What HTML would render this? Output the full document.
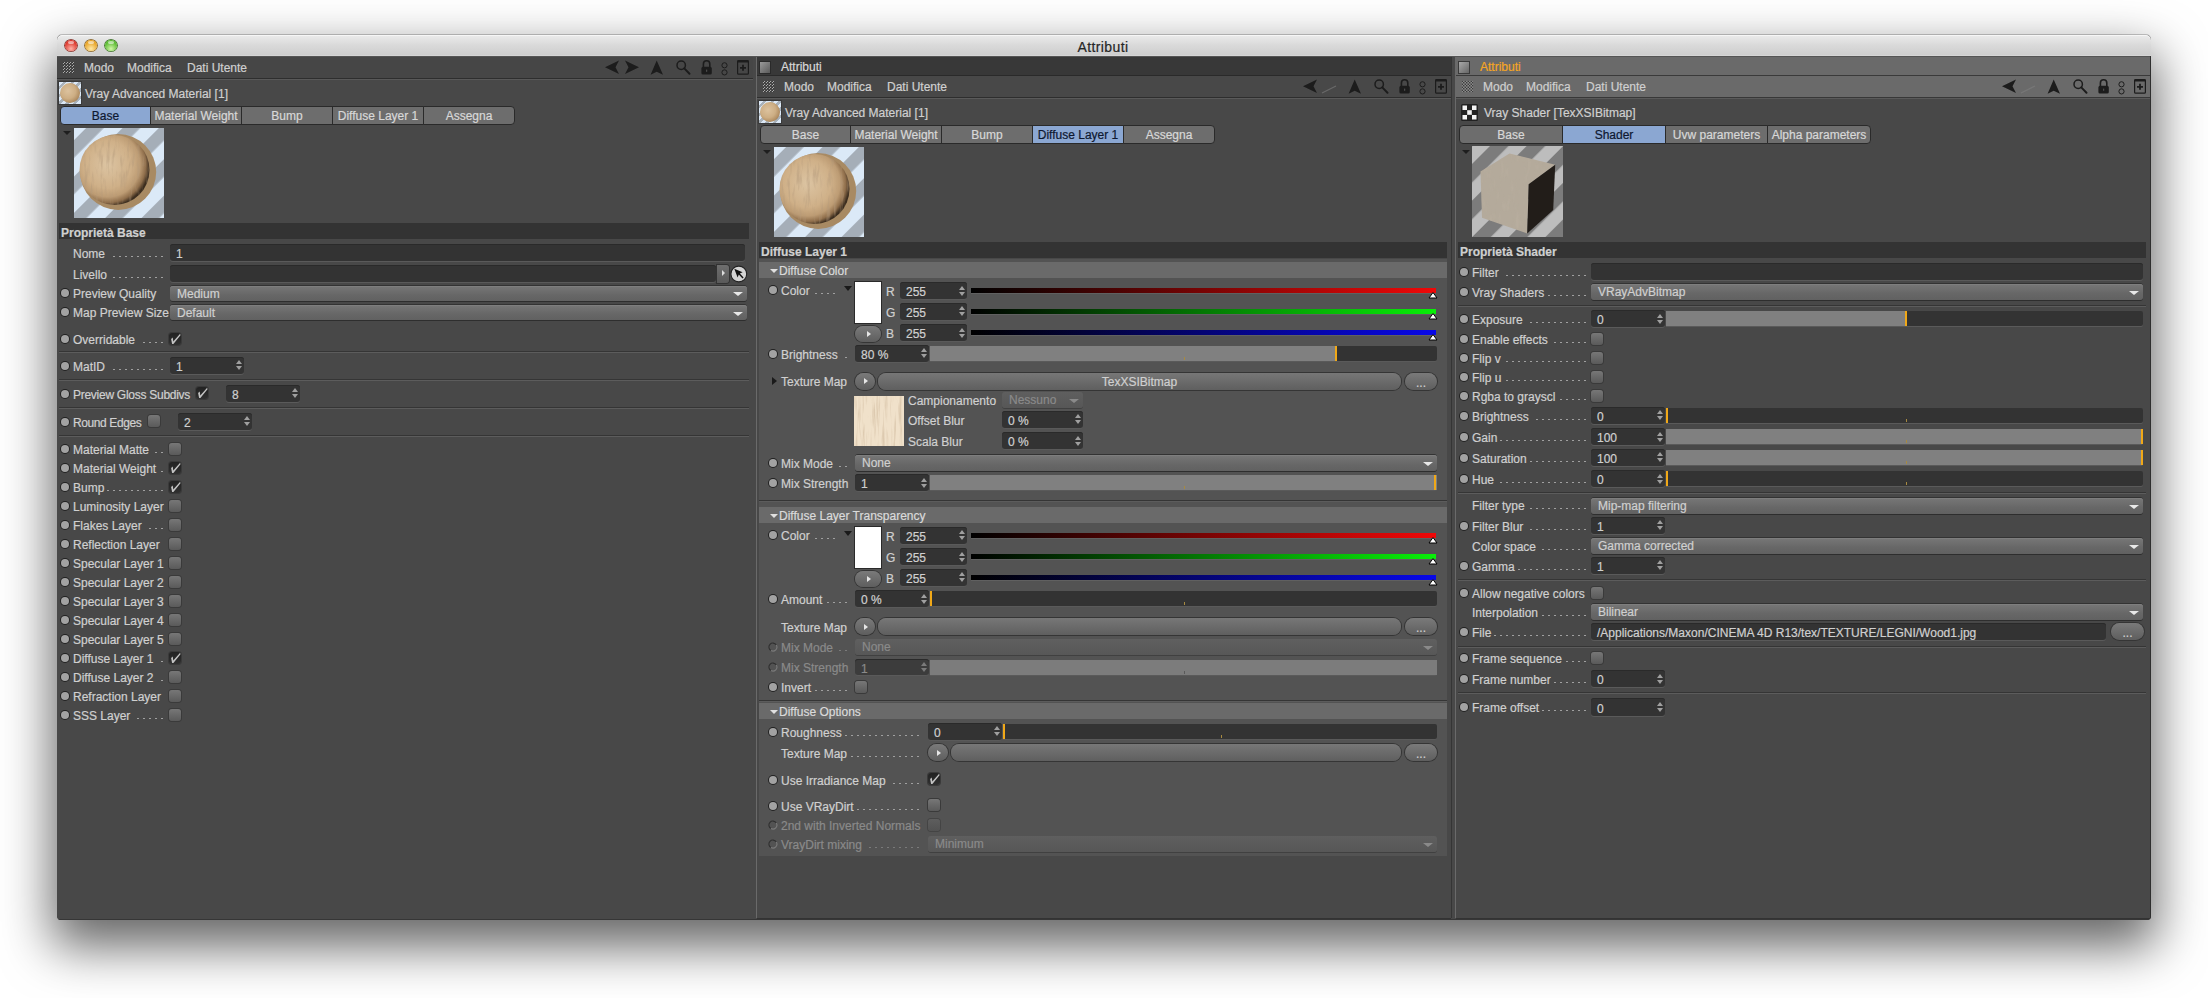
<!DOCTYPE html><html><head><meta charset="utf-8"><style>
html,body{margin:0;padding:0}
body{width:2208px;height:998px;background:#ffffff;position:relative;overflow:hidden;font-family:"Liberation Sans",sans-serif}
.t{position:absolute;white-space:pre;font:12px/14px "Liberation Sans",sans-serif;color:#d0d0d0;-webkit-text-stroke:0.2px currentColor}
.b{position:absolute;box-sizing:border-box}
.fld{position:absolute;box-sizing:border-box;background:#333333;border-radius:3px;box-shadow:inset 0 1px 0 #2a2a2a,0 1px 0 #5a5a5a}
.dd{position:absolute;box-sizing:border-box;background:linear-gradient(#777,#676767 60%,#616161);border-radius:3px;box-shadow:0 1px 0 #2e2e2e,0 -1px 0 #333,inset 0 1px 0 #7e7e7e}
.dd.dis{background:linear-gradient(#5f5f5f,#575757);box-shadow:0 1px 0 #404040}
.rad{position:absolute;width:8px;height:8px;border-radius:50%;background:#a2a2a2;box-shadow:0 0 0 1px #222;box-sizing:border-box}
.rad.dis{background:transparent;box-shadow:none;border:1px dashed #3a3a3a}
.up{position:absolute;width:0;height:0;border-style:solid;border-width:0 3px 4px 3px;border-color:transparent transparent #a0a0a0 transparent}
.dn{position:absolute;width:0;height:0;border-style:solid;border-width:4px 3px 0 3px;border-color:#a0a0a0 transparent transparent transparent}
.chk{position:absolute;width:12px;height:12px;border-radius:3px;background:linear-gradient(#777,#5a5a5a);box-shadow:0 0 0 1px #3a3a3a;box-sizing:border-box}
.chk.dis{background:linear-gradient(#5e5e5e,#525252);box-shadow:0 0 0 1px #444}
.chk.on{background:linear-gradient(#222,#303030);box-shadow:0 0 0 1px #3a3a3a}
.tab{position:absolute;box-sizing:border-box;border:1px solid #2a2a2a}
.rb{position:absolute;box-sizing:border-box;border-radius:9px;background:linear-gradient(#7a7a7a,#5e5e5e);box-shadow:0 0 0 1px #353535}
</style></head><body>

<div class="b" style="left:57px;top:35px;width:2094px;height:885px;border-radius:5px 5px 4px 4px;box-shadow:0 22px 50px 5px rgba(0,0,0,0.6),0 -1px 0 0 rgba(0,0,0,0.2);background:#484848"></div>
<div style="position:absolute;left:0;top:0;width:2208px;height:998px;clip-path:inset(35px 57px 78px 57px round 5px 5px 4px 4px)">
<div class="b" style="left:57px;top:35px;width:2094px;height:21px;border-radius:5px 5px 0 0;background:linear-gradient(#ebebeb,#d9d9d9 50%,#cdcdcd);box-shadow:inset 0 1px 0 #f6f6f6"></div>
<div class="b" style="left:57px;top:55px;width:2094px;height:1px;background:#d6d6d6"></div>
<div class="t" style="left:1003px;top:40px;color:#262626;font-size:14px;letter-spacing:0.4px;width:200px;text-align:center">Attributi</div>
<div class="b" style="left:65.0px;top:39.8px;width:11.6px;height:11.6px;border-radius:50%;background:radial-gradient(circle at 50% 80%,#ffb3a8 0,#dd3b30 65%);box-shadow:0 0 0 0.8px #7a1c15,0 0.5px 0.5px 0.8px rgba(255,255,255,0.6)"></div>
<div class="b" style="left:67.6px;top:41px;width:6.4px;height:3.2px;border-radius:50%;background:rgba(255,255,255,0.55)"></div>
<div class="b" style="left:85.0px;top:39.8px;width:11.6px;height:11.6px;border-radius:50%;background:radial-gradient(circle at 50% 80%,#ffe9a6 0,#e8a52a 65%);box-shadow:0 0 0 0.8px #7d5410,0 0.5px 0.5px 0.8px rgba(255,255,255,0.6)"></div>
<div class="b" style="left:87.6px;top:41px;width:6.4px;height:3.2px;border-radius:50%;background:rgba(255,255,255,0.55)"></div>
<div class="b" style="left:105.0px;top:39.8px;width:11.6px;height:11.6px;border-radius:50%;background:radial-gradient(circle at 50% 80%,#d2f7a8 0,#5ebc35 65%);box-shadow:0 0 0 0.8px #2a6312,0 0.5px 0.5px 0.8px rgba(255,255,255,0.6)"></div>
<div class="b" style="left:107.6px;top:41px;width:6.4px;height:3.2px;border-radius:50%;background:rgba(255,255,255,0.55)"></div>
<div class="b" style="left:57px;top:56px;width:699px;height:864px;background:#484848;border-bottom-left-radius:4px"></div>
<div class="b" style="left:57px;top:56px;width:696px;height:22px;background:#464646"></div>
<div class="b" style="left:57px;top:78px;width:696px;height:1px;background:#2e2e2e"></div>
<div class="b" style="left:57px;top:79px;width:696px;height:1px;background:#595959"></div>
<svg class="b" style="left:63px;top:62px" width="12" height="12" shape-rendering="crispEdges"><rect x="0" y="0" width="1" height="1" fill="#3a3a3a"/><rect x="1" y="1" width="1" height="1" fill="#3a3a3a"/><rect x="1" y="0" width="1" height="1" fill="#acacac"/><rect x="0" y="1" width="1" height="1" fill="#acacac"/><rect x="0" y="3" width="1" height="1" fill="#3a3a3a"/><rect x="1" y="4" width="1" height="1" fill="#3a3a3a"/><rect x="1" y="3" width="1" height="1" fill="#acacac"/><rect x="0" y="4" width="1" height="1" fill="#acacac"/><rect x="0" y="6" width="1" height="1" fill="#3a3a3a"/><rect x="1" y="7" width="1" height="1" fill="#3a3a3a"/><rect x="1" y="6" width="1" height="1" fill="#acacac"/><rect x="0" y="7" width="1" height="1" fill="#acacac"/><rect x="0" y="9" width="1" height="1" fill="#3a3a3a"/><rect x="1" y="10" width="1" height="1" fill="#3a3a3a"/><rect x="1" y="9" width="1" height="1" fill="#acacac"/><rect x="0" y="10" width="1" height="1" fill="#acacac"/><rect x="3" y="0" width="1" height="1" fill="#3a3a3a"/><rect x="4" y="1" width="1" height="1" fill="#3a3a3a"/><rect x="4" y="0" width="1" height="1" fill="#acacac"/><rect x="3" y="1" width="1" height="1" fill="#acacac"/><rect x="3" y="3" width="1" height="1" fill="#3a3a3a"/><rect x="4" y="4" width="1" height="1" fill="#3a3a3a"/><rect x="4" y="3" width="1" height="1" fill="#acacac"/><rect x="3" y="4" width="1" height="1" fill="#acacac"/><rect x="3" y="6" width="1" height="1" fill="#3a3a3a"/><rect x="4" y="7" width="1" height="1" fill="#3a3a3a"/><rect x="4" y="6" width="1" height="1" fill="#acacac"/><rect x="3" y="7" width="1" height="1" fill="#acacac"/><rect x="3" y="9" width="1" height="1" fill="#3a3a3a"/><rect x="4" y="10" width="1" height="1" fill="#3a3a3a"/><rect x="4" y="9" width="1" height="1" fill="#acacac"/><rect x="3" y="10" width="1" height="1" fill="#acacac"/><rect x="6" y="0" width="1" height="1" fill="#3a3a3a"/><rect x="7" y="1" width="1" height="1" fill="#3a3a3a"/><rect x="7" y="0" width="1" height="1" fill="#acacac"/><rect x="6" y="1" width="1" height="1" fill="#acacac"/><rect x="6" y="3" width="1" height="1" fill="#3a3a3a"/><rect x="7" y="4" width="1" height="1" fill="#3a3a3a"/><rect x="7" y="3" width="1" height="1" fill="#acacac"/><rect x="6" y="4" width="1" height="1" fill="#acacac"/><rect x="6" y="6" width="1" height="1" fill="#3a3a3a"/><rect x="7" y="7" width="1" height="1" fill="#3a3a3a"/><rect x="7" y="6" width="1" height="1" fill="#acacac"/><rect x="6" y="7" width="1" height="1" fill="#acacac"/><rect x="6" y="9" width="1" height="1" fill="#3a3a3a"/><rect x="7" y="10" width="1" height="1" fill="#3a3a3a"/><rect x="7" y="9" width="1" height="1" fill="#acacac"/><rect x="6" y="10" width="1" height="1" fill="#acacac"/><rect x="9" y="0" width="1" height="1" fill="#3a3a3a"/><rect x="10" y="1" width="1" height="1" fill="#3a3a3a"/><rect x="10" y="0" width="1" height="1" fill="#acacac"/><rect x="9" y="1" width="1" height="1" fill="#acacac"/><rect x="9" y="3" width="1" height="1" fill="#3a3a3a"/><rect x="10" y="4" width="1" height="1" fill="#3a3a3a"/><rect x="10" y="3" width="1" height="1" fill="#acacac"/><rect x="9" y="4" width="1" height="1" fill="#acacac"/><rect x="9" y="6" width="1" height="1" fill="#3a3a3a"/><rect x="10" y="7" width="1" height="1" fill="#3a3a3a"/><rect x="10" y="6" width="1" height="1" fill="#acacac"/><rect x="9" y="7" width="1" height="1" fill="#acacac"/><rect x="9" y="9" width="1" height="1" fill="#3a3a3a"/><rect x="10" y="10" width="1" height="1" fill="#3a3a3a"/><rect x="10" y="9" width="1" height="1" fill="#acacac"/><rect x="9" y="10" width="1" height="1" fill="#acacac"/></svg>
<div class="t" style="left:84px;top:61px;color:#d0d0d0;">Modo</div>
<div class="t" style="left:127px;top:61px;color:#d0d0d0;">Modifica</div>
<div class="t" style="left:187px;top:61px;color:#d0d0d0;">Dati Utente</div>
<svg class="b" style="left:605px;top:59px" width="150" height="18" viewBox="0 -2 150 18">
<path d="M0 6.3 L14 -0.6 L10.5 6.3 L14 13 Z" fill="#1c1c1c"/>
<path d="M34 6.3 L20 -0.6 L23.5 6.3 L20 13 Z" fill="#1c1c1c"/>
<path d="M51.7 -0.4 L58 13.8 L51.7 10.8 L45.6 13.8 Z" fill="#1c1c1c"/>
<circle cx="76.2" cy="4.2" r="4.2" fill="none" stroke="#1c1c1c" stroke-width="1.5"/>
<path d="M79.3 7.4 L84.5 12.7" stroke="#1c1c1c" stroke-width="2" stroke-linecap="round"/>
<path d="M98.4 6.5 V3 A3.2 3.2 0 0 1 104.8 3 V6.5" fill="none" stroke="#1c1c1c" stroke-width="1.6"/>
<rect x="96.4" y="5.8" width="10.4" height="7.8" rx="1.6" fill="#1c1c1c"/>
<rect x="101.1" y="8.6" width="1.1" height="2.2" fill="#6a6a6a" opacity="0.7"/>
<circle cx="119.5" cy="4.3" r="2.6" fill="none" stroke="#1c1c1c" stroke-width="1"/>
<circle cx="119.5" cy="11.4" r="2.6" fill="none" stroke="#1c1c1c" stroke-width="1"/>
<rect x="132.6" y="-0.4" width="10.8" height="13.6" rx="1" fill="none" stroke="#1c1c1c" stroke-width="1.2"/>
<rect x="132.3" y="-0.7" width="11.4" height="2.2" rx="0.8" fill="#1c1c1c"/>
<path d="M138 3.8 V9.8 M135 6.8 H141" stroke="#1c1c1c" stroke-width="1.8"/>
</svg>
<div class="b" style="left:59px;top:82px;width:22px;height:22px;background:repeating-linear-gradient(135deg,#dce9f7 0 3.1px,#a9b2bb 3.1px 5.5px);overflow:hidden;box-shadow:0 0 0 1px #3a3a3a"><div style="position:absolute;left:1.3px;top:1.3px;width:19.8px;height:19.8px;border-radius:50%;background:radial-gradient(circle at 40% 40%,#dcc29e 0%,#cdae84 45%,#b08d62 70%,#6a5036 88%,#2e2418 100%)"></div></div>
<div class="t" style="left:85px;top:87px;color:#d0d0d0;">Vray Advanced Material [1]</div>
<div class="tab" style="left:60px;top:106px;width:91px;height:19px;background:#8ba7d2;border-radius:4px 0 0 4px;"></div>
<div class="t" style="left:60px;top:109px;width:91px;text-align:center;color:#0e1830">Base</div>
<div class="tab" style="left:150px;top:106px;width:92px;height:19px;background:#6d6d6d;"></div>
<div class="t" style="left:150px;top:109px;width:92px;text-align:center;color:#d8d8d8">Material Weight</div>
<div class="tab" style="left:241px;top:106px;width:92px;height:19px;background:#6d6d6d;"></div>
<div class="t" style="left:241px;top:109px;width:92px;text-align:center;color:#d8d8d8">Bump</div>
<div class="tab" style="left:332px;top:106px;width:92px;height:19px;background:#6d6d6d;"></div>
<div class="t" style="left:332px;top:109px;width:92px;text-align:center;color:#d8d8d8">Diffuse Layer 1</div>
<div class="tab" style="left:423px;top:106px;width:92px;height:19px;background:#6d6d6d;border-radius:0 4px 4px 0;"></div>
<div class="t" style="left:423px;top:109px;width:92px;text-align:center;color:#d8d8d8">Assegna</div>
<div class="dn" style="left:63px;top:131px;border-width:4px 4px 0 4px;border-top-color:#1e1e1e"></div>
<svg class="b" style="left:74px;top:128px" width="90" height="90" viewBox="0 0 90 90"><defs><pattern id="st1" patternUnits="userSpaceOnUse" width="25.7" height="25.7" patternTransform="rotate(45) translate(8.6 0)"><rect width="25.7" height="25.7" fill="#dbe9f7"/><rect x="0" y="0" width="12.5" height="25.7" fill="#a5aeb8"/></pattern>
<radialGradient id="sg1" cx="0.4" cy="0.42" r="0.62"><stop offset="0" stop-color="#dcc4a2"/><stop offset="0.55" stop-color="#cfb088"/><stop offset="0.75" stop-color="#bd9c74"/><stop offset="0.88" stop-color="#8f6e4b"/><stop offset="0.97" stop-color="#3e2f20"/><stop offset="1" stop-color="#3a2c1e"/></radialGradient>
<pattern id="wg1" patternUnits="userSpaceOnUse" width="7" height="90"><rect width="7" height="90" fill="none"/><rect x="1" width="1" height="90" fill="#8a6840" opacity="0.10"/><rect x="4.5" width="0.8" height="90" fill="#8a6840" opacity="0.08"/></pattern>
<filter id="bl1"><feGaussianBlur stdDeviation="0.7"/></filter><filter id="tn1" x="0" y="0" width="100%" height="100%"><feTurbulence type="fractalNoise" baseFrequency="0.3 0.05" numOctaves="3" seed="1"/><feColorMatrix type="matrix" values="0 0 0 0 0.45  0 0 0 0 0.32  0 0 0 0 0.2  3.0 0 0 0 -1.5"/></filter></defs>
<rect width="90" height="90" fill="url(#st1)"/>
<circle cx="44.2" cy="44" r="38" fill="#a88a64" filter="url(#bl1)"/>
<circle cx="40.5" cy="42" r="35" fill="url(#sg1)"/>
<clipPath id="cp1"><circle cx="40.5" cy="42" r="35"/></clipPath><rect x="5" y="6" width="72" height="72" filter="url(#tn1)" clip-path="url(#cp1)" opacity="0.5"/>
</svg>
<div class="b" style="left:59px;top:223px;width:690px;height:16px;background:#333333"></div>
<div class="t" style="left:61px;top:226px;color:#d0d0d0;font-weight:bold;">Proprietà Base</div>
<div class="t" style="left:73px;top:247px;color:#d0d0d0;">Nome</div>
<div class="b" style="left:113px;top:256px;width:54px;height:1px;background:repeating-linear-gradient(to right,#a0a0a0 0 2px,transparent 2px 6px)"></div>
<div class="fld" style="left:170px;top:244px;width:575px;height:17px"></div>
<div class="t" style="left:176px;top:247px;color:#d0d0d0;">1</div>
<div class="t" style="left:73px;top:268px;color:#d0d0d0;">Livello</div>
<div class="b" style="left:113px;top:277px;width:54px;height:1px;background:repeating-linear-gradient(to right,#a0a0a0 0 2px,transparent 2px 6px)"></div>
<div class="fld" style="left:170px;top:265px;width:546px;height:17px"></div>
<div class="b" style="left:717px;top:265px;width:12px;height:18px;background:linear-gradient(#6e6e6e,#5a5a5a);border-radius:0 3px 3px 0;box-shadow:0 0 0 1px #333"></div>
<div class="b" style="left:722px;top:270px;width:0;height:0;border-style:solid;border-width:3px 0 3px 3px;border-color:transparent transparent transparent #ddd"></div>
<svg class="b" style="left:730px;top:265px" width="18" height="18" viewBox="0 0 18 18"><circle cx="8.8" cy="9" r="7.9" fill="#d4d4d4" stroke="#222" stroke-width="1.1"/><path d="M4.3 3.8 L12.6 7.2 L9.9 8.6 L13.6 12.4 L12.5 13.4 L8.8 9.6 L7.6 12.4 Z" fill="#111"/></svg>
<div class="rad" style="left:61px;top:289px"></div>
<div class="t" style="left:73px;top:287px;color:#d0d0d0;">Preview Quality</div>
<div class="dd" style="left:170px;top:286px;width:577px;height:15px"></div>
<div class="dn" style="left:733px;top:292px;border-width:4px 5px 0 5px;border-top-color:#e8e8e8"></div>
<div class="t" style="left:177px;top:287px;color:#d0d0d0;">Medium</div>
<div class="rad" style="left:61px;top:308px"></div>
<div class="t" style="left:73px;top:306px;color:#d0d0d0;">Map Preview Size</div>
<div class="dd" style="left:170px;top:305px;width:577px;height:15px"></div>
<div class="dn" style="left:733px;top:312px;border-width:4px 5px 0 5px;border-top-color:#e8e8e8"></div>
<div class="t" style="left:177px;top:306px;color:#d0d0d0;">Default</div>
<div class="rad" style="left:61px;top:335px"></div>
<div class="t" style="left:73px;top:333px;color:#d0d0d0;">Overridable</div>
<div class="b" style="left:143px;top:342px;width:24px;height:1px;background:repeating-linear-gradient(to right,#a0a0a0 0 2px,transparent 2px 6px)"></div>
<div class="chk on" style="left:169px;top:333px"></div>
<svg class="b" style="left:169px;top:333px" width="13" height="13" viewBox="0 0 13 13"><path d="M2.1 5.9 L3.7 4.6 L4.3 8.4 L10.9 0.9 L11.7 1.9 L4.4 10.9 L3.1 11.0 Z" fill="#c4c4c4"/></svg>
<div class="b" style="left:59px;top:351px;width:690px;height:1px;background:#353535"></div>
<div class="b" style="left:59px;top:352px;width:690px;height:1px;background:#5c5c5c"></div>
<div class="rad" style="left:61px;top:362px"></div>
<div class="t" style="left:73px;top:360px;color:#d0d0d0;">MatID</div>
<div class="b" style="left:113px;top:369px;width:54px;height:1px;background:repeating-linear-gradient(to right,#a0a0a0 0 2px,transparent 2px 6px)"></div>
<div class="fld" style="left:170px;top:357px;width:74px;height:17px"></div>
<div class="up" style="left:236px;top:360px;border-bottom-color:#a0a0a0"></div>
<div class="dn" style="left:236px;top:366px;border-top-color:#a0a0a0"></div>
<div class="t" style="left:176px;top:360px;color:#d0d0d0;">1</div>
<div class="b" style="left:59px;top:379px;width:690px;height:1px;background:#353535"></div>
<div class="b" style="left:59px;top:380px;width:690px;height:1px;background:#5c5c5c"></div>
<div class="rad" style="left:61px;top:390px"></div>
<div class="t" style="left:73px;top:388px;color:#d0d0d0;letter-spacing:-0.27px">Preview Gloss Subdivs</div>
<div class="chk on" style="left:196px;top:387px"></div>
<svg class="b" style="left:196px;top:387px" width="13" height="13" viewBox="0 0 13 13"><path d="M2.1 5.9 L3.7 4.6 L4.3 8.4 L10.9 0.9 L11.7 1.9 L4.4 10.9 L3.1 11.0 Z" fill="#c4c4c4"/></svg>
<div class="fld" style="left:226px;top:385px;width:74px;height:17px"></div>
<div class="up" style="left:292px;top:388px;border-bottom-color:#a0a0a0"></div>
<div class="dn" style="left:292px;top:394px;border-top-color:#a0a0a0"></div>
<div class="t" style="left:232px;top:388px;color:#d0d0d0;">8</div>
<div class="b" style="left:59px;top:407px;width:690px;height:1px;background:#353535"></div>
<div class="b" style="left:59px;top:408px;width:690px;height:1px;background:#5c5c5c"></div>
<div class="rad" style="left:61px;top:418px"></div>
<div class="t" style="left:73px;top:416px;color:#d0d0d0;letter-spacing:-0.4px">Round Edges</div>
<div class="chk" style="left:148px;top:415px"></div>
<div class="fld" style="left:178px;top:413px;width:74px;height:17px"></div>
<div class="up" style="left:244px;top:416px;border-bottom-color:#a0a0a0"></div>
<div class="dn" style="left:244px;top:422px;border-top-color:#a0a0a0"></div>
<div class="t" style="left:184px;top:416px;color:#d0d0d0;">2</div>
<div class="b" style="left:59px;top:435px;width:690px;height:1px;background:#353535"></div>
<div class="b" style="left:59px;top:436px;width:690px;height:1px;background:#5c5c5c"></div>
<div class="rad" style="left:61px;top:445px"></div>
<div class="t" style="left:73px;top:443px;color:#d0d0d0;">Material Matte</div>
<div class="b" style="left:155px;top:452px;width:12px;height:1px;background:repeating-linear-gradient(to right,#a0a0a0 0 2px,transparent 2px 6px)"></div>
<div class="chk" style="left:169px;top:443px"></div>
<div class="rad" style="left:61px;top:464px"></div>
<div class="t" style="left:73px;top:462px;color:#d0d0d0;">Material Weight</div>
<div class="b" style="left:161px;top:471px;width:6px;height:1px;background:repeating-linear-gradient(to right,#a0a0a0 0 2px,transparent 2px 6px)"></div>
<div class="chk on" style="left:169px;top:462px"></div>
<svg class="b" style="left:169px;top:462px" width="13" height="13" viewBox="0 0 13 13"><path d="M2.1 5.9 L3.7 4.6 L4.3 8.4 L10.9 0.9 L11.7 1.9 L4.4 10.9 L3.1 11.0 Z" fill="#c4c4c4"/></svg>
<div class="rad" style="left:61px;top:483px"></div>
<div class="t" style="left:73px;top:481px;color:#d0d0d0;">Bump</div>
<div class="b" style="left:107px;top:490px;width:60px;height:1px;background:repeating-linear-gradient(to right,#a0a0a0 0 2px,transparent 2px 6px)"></div>
<div class="chk on" style="left:169px;top:481px"></div>
<svg class="b" style="left:169px;top:481px" width="13" height="13" viewBox="0 0 13 13"><path d="M2.1 5.9 L3.7 4.6 L4.3 8.4 L10.9 0.9 L11.7 1.9 L4.4 10.9 L3.1 11.0 Z" fill="#c4c4c4"/></svg>
<div class="rad" style="left:61px;top:502px"></div>
<div class="t" style="left:73px;top:500px;color:#d0d0d0;">Luminosity Layer</div>
<div class="chk" style="left:169px;top:500px"></div>
<div class="rad" style="left:61px;top:521px"></div>
<div class="t" style="left:73px;top:519px;color:#d0d0d0;">Flakes Layer</div>
<div class="b" style="left:149px;top:528px;width:18px;height:1px;background:repeating-linear-gradient(to right,#a0a0a0 0 2px,transparent 2px 6px)"></div>
<div class="chk" style="left:169px;top:519px"></div>
<div class="rad" style="left:61px;top:540px"></div>
<div class="t" style="left:73px;top:538px;color:#d0d0d0;">Reflection Layer</div>
<div class="chk" style="left:169px;top:538px"></div>
<div class="rad" style="left:61px;top:559px"></div>
<div class="t" style="left:73px;top:557px;color:#d0d0d0;">Specular Layer 1</div>
<div class="chk" style="left:169px;top:557px"></div>
<div class="rad" style="left:61px;top:578px"></div>
<div class="t" style="left:73px;top:576px;color:#d0d0d0;">Specular Layer 2</div>
<div class="chk" style="left:169px;top:576px"></div>
<div class="rad" style="left:61px;top:597px"></div>
<div class="t" style="left:73px;top:595px;color:#d0d0d0;">Specular Layer 3</div>
<div class="chk" style="left:169px;top:595px"></div>
<div class="rad" style="left:61px;top:616px"></div>
<div class="t" style="left:73px;top:614px;color:#d0d0d0;">Specular Layer 4</div>
<div class="chk" style="left:169px;top:614px"></div>
<div class="rad" style="left:61px;top:635px"></div>
<div class="t" style="left:73px;top:633px;color:#d0d0d0;">Specular Layer 5</div>
<div class="chk" style="left:169px;top:633px"></div>
<div class="rad" style="left:61px;top:654px"></div>
<div class="t" style="left:73px;top:652px;color:#d0d0d0;">Diffuse Layer 1</div>
<div class="b" style="left:161px;top:661px;width:6px;height:1px;background:repeating-linear-gradient(to right,#a0a0a0 0 2px,transparent 2px 6px)"></div>
<div class="chk on" style="left:169px;top:652px"></div>
<svg class="b" style="left:169px;top:652px" width="13" height="13" viewBox="0 0 13 13"><path d="M2.1 5.9 L3.7 4.6 L4.3 8.4 L10.9 0.9 L11.7 1.9 L4.4 10.9 L3.1 11.0 Z" fill="#c4c4c4"/></svg>
<div class="rad" style="left:61px;top:673px"></div>
<div class="t" style="left:73px;top:671px;color:#d0d0d0;">Diffuse Layer 2</div>
<div class="b" style="left:161px;top:680px;width:6px;height:1px;background:repeating-linear-gradient(to right,#a0a0a0 0 2px,transparent 2px 6px)"></div>
<div class="chk" style="left:169px;top:671px"></div>
<div class="rad" style="left:61px;top:692px"></div>
<div class="t" style="left:73px;top:690px;color:#d0d0d0;">Refraction Layer</div>
<div class="chk" style="left:169px;top:690px"></div>
<div class="rad" style="left:61px;top:711px"></div>
<div class="t" style="left:73px;top:709px;color:#d0d0d0;">SSS Layer</div>
<div class="b" style="left:137px;top:718px;width:30px;height:1px;background:repeating-linear-gradient(to right,#a0a0a0 0 2px,transparent 2px 6px)"></div>
<div class="chk" style="left:169px;top:709px"></div>
<div class="b" style="left:756px;top:56px;width:1px;height:862px;background:#6a6a6a"></div>
<div class="b" style="left:757px;top:56px;width:694px;height:864px;background:#484848"></div>
<div class="b" style="left:757px;top:57px;width:694px;height:18px;background:#383838"></div>
<div class="b" style="left:757px;top:75px;width:694px;height:1px;background:#2a2a2a"></div>
<div class="b" style="left:760px;top:62px;width:10px;height:11px;background:linear-gradient(135deg,#9a9a9a,#5a5a5a);box-shadow:0 0 0 1px #2a2a2a"></div>
<div class="t" style="left:781px;top:60px;color:#d8d8d8;">Attributi</div>
<div class="b" style="left:757px;top:76px;width:694px;height:21px;background:#484848"></div>
<div class="b" style="left:757px;top:97px;width:694px;height:1px;background:#2e2e2e"></div>
<div class="b" style="left:757px;top:98px;width:694px;height:1px;background:#5a5a5a"></div>
<svg class="b" style="left:763px;top:81px" width="12" height="12" shape-rendering="crispEdges"><rect x="0" y="0" width="1" height="1" fill="#3a3a3a"/><rect x="1" y="1" width="1" height="1" fill="#3a3a3a"/><rect x="1" y="0" width="1" height="1" fill="#acacac"/><rect x="0" y="1" width="1" height="1" fill="#acacac"/><rect x="0" y="3" width="1" height="1" fill="#3a3a3a"/><rect x="1" y="4" width="1" height="1" fill="#3a3a3a"/><rect x="1" y="3" width="1" height="1" fill="#acacac"/><rect x="0" y="4" width="1" height="1" fill="#acacac"/><rect x="0" y="6" width="1" height="1" fill="#3a3a3a"/><rect x="1" y="7" width="1" height="1" fill="#3a3a3a"/><rect x="1" y="6" width="1" height="1" fill="#acacac"/><rect x="0" y="7" width="1" height="1" fill="#acacac"/><rect x="0" y="9" width="1" height="1" fill="#3a3a3a"/><rect x="1" y="10" width="1" height="1" fill="#3a3a3a"/><rect x="1" y="9" width="1" height="1" fill="#acacac"/><rect x="0" y="10" width="1" height="1" fill="#acacac"/><rect x="3" y="0" width="1" height="1" fill="#3a3a3a"/><rect x="4" y="1" width="1" height="1" fill="#3a3a3a"/><rect x="4" y="0" width="1" height="1" fill="#acacac"/><rect x="3" y="1" width="1" height="1" fill="#acacac"/><rect x="3" y="3" width="1" height="1" fill="#3a3a3a"/><rect x="4" y="4" width="1" height="1" fill="#3a3a3a"/><rect x="4" y="3" width="1" height="1" fill="#acacac"/><rect x="3" y="4" width="1" height="1" fill="#acacac"/><rect x="3" y="6" width="1" height="1" fill="#3a3a3a"/><rect x="4" y="7" width="1" height="1" fill="#3a3a3a"/><rect x="4" y="6" width="1" height="1" fill="#acacac"/><rect x="3" y="7" width="1" height="1" fill="#acacac"/><rect x="3" y="9" width="1" height="1" fill="#3a3a3a"/><rect x="4" y="10" width="1" height="1" fill="#3a3a3a"/><rect x="4" y="9" width="1" height="1" fill="#acacac"/><rect x="3" y="10" width="1" height="1" fill="#acacac"/><rect x="6" y="0" width="1" height="1" fill="#3a3a3a"/><rect x="7" y="1" width="1" height="1" fill="#3a3a3a"/><rect x="7" y="0" width="1" height="1" fill="#acacac"/><rect x="6" y="1" width="1" height="1" fill="#acacac"/><rect x="6" y="3" width="1" height="1" fill="#3a3a3a"/><rect x="7" y="4" width="1" height="1" fill="#3a3a3a"/><rect x="7" y="3" width="1" height="1" fill="#acacac"/><rect x="6" y="4" width="1" height="1" fill="#acacac"/><rect x="6" y="6" width="1" height="1" fill="#3a3a3a"/><rect x="7" y="7" width="1" height="1" fill="#3a3a3a"/><rect x="7" y="6" width="1" height="1" fill="#acacac"/><rect x="6" y="7" width="1" height="1" fill="#acacac"/><rect x="6" y="9" width="1" height="1" fill="#3a3a3a"/><rect x="7" y="10" width="1" height="1" fill="#3a3a3a"/><rect x="7" y="9" width="1" height="1" fill="#acacac"/><rect x="6" y="10" width="1" height="1" fill="#acacac"/><rect x="9" y="0" width="1" height="1" fill="#3a3a3a"/><rect x="10" y="1" width="1" height="1" fill="#3a3a3a"/><rect x="10" y="0" width="1" height="1" fill="#acacac"/><rect x="9" y="1" width="1" height="1" fill="#acacac"/><rect x="9" y="3" width="1" height="1" fill="#3a3a3a"/><rect x="10" y="4" width="1" height="1" fill="#3a3a3a"/><rect x="10" y="3" width="1" height="1" fill="#acacac"/><rect x="9" y="4" width="1" height="1" fill="#acacac"/><rect x="9" y="6" width="1" height="1" fill="#3a3a3a"/><rect x="10" y="7" width="1" height="1" fill="#3a3a3a"/><rect x="10" y="6" width="1" height="1" fill="#acacac"/><rect x="9" y="7" width="1" height="1" fill="#acacac"/><rect x="9" y="9" width="1" height="1" fill="#3a3a3a"/><rect x="10" y="10" width="1" height="1" fill="#3a3a3a"/><rect x="10" y="9" width="1" height="1" fill="#acacac"/><rect x="9" y="10" width="1" height="1" fill="#acacac"/></svg>
<div class="t" style="left:784px;top:80px;color:#d0d0d0;">Modo</div>
<div class="t" style="left:827px;top:80px;color:#d0d0d0;">Modifica</div>
<div class="t" style="left:887px;top:80px;color:#d0d0d0;">Dati Utente</div>
<svg class="b" style="left:1303px;top:78px" width="150" height="18" viewBox="0 -2 150 18">
<path d="M0 6.3 L14 -0.6 L10.5 6.3 L14 13 Z" fill="#1c1c1c"/>
<path d="M19 13 L33 6" stroke="#7f7f7f" stroke-width="1.2" opacity="0.6"/>
<path d="M51.7 -0.4 L58 13.8 L51.7 10.8 L45.6 13.8 Z" fill="#1c1c1c"/>
<circle cx="76.2" cy="4.2" r="4.2" fill="none" stroke="#1c1c1c" stroke-width="1.5"/>
<path d="M79.3 7.4 L84.5 12.7" stroke="#1c1c1c" stroke-width="2" stroke-linecap="round"/>
<path d="M98.4 6.5 V3 A3.2 3.2 0 0 1 104.8 3 V6.5" fill="none" stroke="#1c1c1c" stroke-width="1.6"/>
<rect x="96.4" y="5.8" width="10.4" height="7.8" rx="1.6" fill="#1c1c1c"/>
<rect x="101.1" y="8.6" width="1.1" height="2.2" fill="#6a6a6a" opacity="0.7"/>
<circle cx="119.5" cy="4.3" r="2.6" fill="none" stroke="#1c1c1c" stroke-width="1"/>
<circle cx="119.5" cy="11.4" r="2.6" fill="none" stroke="#1c1c1c" stroke-width="1"/>
<rect x="132.6" y="-0.4" width="10.8" height="13.6" rx="1" fill="none" stroke="#1c1c1c" stroke-width="1.2"/>
<rect x="132.3" y="-0.7" width="11.4" height="2.2" rx="0.8" fill="#1c1c1c"/>
<path d="M138 3.8 V9.8 M135 6.8 H141" stroke="#1c1c1c" stroke-width="1.8"/>
</svg>
<div class="b" style="left:759px;top:101px;width:22px;height:22px;background:repeating-linear-gradient(135deg,#dce9f7 0 3.1px,#a9b2bb 3.1px 5.5px);overflow:hidden;box-shadow:0 0 0 1px #3a3a3a"><div style="position:absolute;left:1.3px;top:1.3px;width:19.8px;height:19.8px;border-radius:50%;background:radial-gradient(circle at 40% 40%,#dcc29e 0%,#cdae84 45%,#b08d62 70%,#6a5036 88%,#2e2418 100%)"></div></div>
<div class="t" style="left:785px;top:106px;color:#d0d0d0;">Vray Advanced Material [1]</div>
<div class="tab" style="left:760px;top:125px;width:91px;height:19px;background:#6d6d6d;border-radius:4px 0 0 4px;"></div>
<div class="t" style="left:760px;top:128px;width:91px;text-align:center;color:#d8d8d8">Base</div>
<div class="tab" style="left:850px;top:125px;width:92px;height:19px;background:#6d6d6d;"></div>
<div class="t" style="left:850px;top:128px;width:92px;text-align:center;color:#d8d8d8">Material Weight</div>
<div class="tab" style="left:941px;top:125px;width:92px;height:19px;background:#6d6d6d;"></div>
<div class="t" style="left:941px;top:128px;width:92px;text-align:center;color:#d8d8d8">Bump</div>
<div class="tab" style="left:1032px;top:125px;width:92px;height:19px;background:#8ba7d2;"></div>
<div class="t" style="left:1032px;top:128px;width:92px;text-align:center;color:#0e1830">Diffuse Layer 1</div>
<div class="tab" style="left:1123px;top:125px;width:92px;height:19px;background:#6d6d6d;border-radius:0 4px 4px 0;"></div>
<div class="t" style="left:1123px;top:128px;width:92px;text-align:center;color:#d8d8d8">Assegna</div>
<div class="dn" style="left:763px;top:150px;border-width:4px 4px 0 4px;border-top-color:#1e1e1e"></div>
<svg class="b" style="left:774px;top:147px" width="90" height="90" viewBox="0 0 90 90"><defs><pattern id="st2" patternUnits="userSpaceOnUse" width="25.7" height="25.7" patternTransform="rotate(45) translate(8.6 0)"><rect width="25.7" height="25.7" fill="#dbe9f7"/><rect x="0" y="0" width="12.5" height="25.7" fill="#a5aeb8"/></pattern>
<radialGradient id="sg2" cx="0.4" cy="0.42" r="0.62"><stop offset="0" stop-color="#dcc4a2"/><stop offset="0.55" stop-color="#cfb088"/><stop offset="0.75" stop-color="#bd9c74"/><stop offset="0.88" stop-color="#8f6e4b"/><stop offset="0.97" stop-color="#3e2f20"/><stop offset="1" stop-color="#3a2c1e"/></radialGradient>
<pattern id="wg2" patternUnits="userSpaceOnUse" width="7" height="90"><rect width="7" height="90" fill="none"/><rect x="1" width="1" height="90" fill="#8a6840" opacity="0.10"/><rect x="4.5" width="0.8" height="90" fill="#8a6840" opacity="0.08"/></pattern>
<filter id="bl2"><feGaussianBlur stdDeviation="0.7"/></filter><filter id="tn2" x="0" y="0" width="100%" height="100%"><feTurbulence type="fractalNoise" baseFrequency="0.3 0.05" numOctaves="3" seed="2"/><feColorMatrix type="matrix" values="0 0 0 0 0.45  0 0 0 0 0.32  0 0 0 0 0.2  3.0 0 0 0 -1.5"/></filter></defs>
<rect width="90" height="90" fill="url(#st2)"/>
<circle cx="44.2" cy="44" r="38" fill="#a88a64" filter="url(#bl2)"/>
<circle cx="40.5" cy="42" r="35" fill="url(#sg2)"/>
<clipPath id="cp2"><circle cx="40.5" cy="42" r="35"/></clipPath><rect x="5" y="6" width="72" height="72" filter="url(#tn2)" clip-path="url(#cp2)" opacity="0.5"/>
</svg>
<div class="b" style="left:759px;top:242px;width:688px;height:16px;background:#333333"></div>
<div class="t" style="left:761px;top:245px;color:#d0d0d0;font-weight:bold;">Diffuse Layer 1</div>
<div class="b" style="left:759px;top:259px;width:688px;height:597px;background:#535353"></div>
<div class="b" style="left:759px;top:262px;width:688px;height:16px;background:#6a6a6a"></div>
<div class="dn" style="left:770px;top:269px;border-width:4px 4px 0 4px;border-top-color:#e0e0e0"></div>
<div class="t" style="left:779px;top:264px;color:#dadada;">Diffuse Color</div>
<div class="rad" style="left:769px;top:286px"></div>
<div class="t" style="left:781px;top:284px;color:#d0d0d0;">Color</div>
<div class="b" style="left:815px;top:293px;width:24px;height:1px;background:repeating-linear-gradient(to right,#a0a0a0 0 2px,transparent 2px 6px)"></div>
<div class="dn" style="left:844px;top:286px;border-width:5px 4px 0 4px;border-top-color:#1a1a1a"></div>
<div class="b" style="left:855px;top:282px;width:26px;height:41px;background:#fff;box-shadow:0 0 0 1px #2a2a2a"></div>
<div class="rb" style="left:855px;top:326px;width:26px;height:16px"></div>
<div class="b" style="left:867px;top:331px;width:0;height:0;border-style:solid;border-width:3.5px 0 3.5px 4px;border-color:transparent transparent transparent #e6e6e6"></div>
<div class="t" style="left:886px;top:285px;color:#d0d0d0;">R</div>
<div class="fld" style="left:900px;top:282px;width:67px;height:17px"></div>
<div class="up" style="left:959px;top:286px;border-bottom-color:#a0a0a0"></div>
<div class="dn" style="left:959px;top:292px;border-top-color:#a0a0a0"></div>
<div class="t" style="left:906px;top:285px;color:#d0d0d0;">255</div>
<div class="b" style="left:971px;top:288px;width:465px;height:5px;background:linear-gradient(to right,#000,#f00808);box-shadow:0 1px 0 rgba(255,255,255,0.08)"></div>
<svg class="b" style="left:1428px;top:291px" width="10" height="8" viewBox="0 0 10 8"><path d="M1 7 L5 1.5 L9 7 Z" fill="#fff" stroke="#000" stroke-width="1"/></svg>
<div class="t" style="left:886px;top:306px;color:#d0d0d0;">G</div>
<div class="fld" style="left:900px;top:303px;width:67px;height:17px"></div>
<div class="up" style="left:959px;top:306px;border-bottom-color:#a0a0a0"></div>
<div class="dn" style="left:959px;top:312px;border-top-color:#a0a0a0"></div>
<div class="t" style="left:906px;top:306px;color:#d0d0d0;">255</div>
<div class="b" style="left:971px;top:309px;width:465px;height:5px;background:linear-gradient(to right,#000,#08f008);box-shadow:0 1px 0 rgba(255,255,255,0.08)"></div>
<svg class="b" style="left:1428px;top:312px" width="10" height="8" viewBox="0 0 10 8"><path d="M1 7 L5 1.5 L9 7 Z" fill="#fff" stroke="#000" stroke-width="1"/></svg>
<div class="t" style="left:886px;top:327px;color:#d0d0d0;">B</div>
<div class="fld" style="left:900px;top:324px;width:67px;height:17px"></div>
<div class="up" style="left:959px;top:328px;border-bottom-color:#a0a0a0"></div>
<div class="dn" style="left:959px;top:334px;border-top-color:#a0a0a0"></div>
<div class="t" style="left:906px;top:327px;color:#d0d0d0;">255</div>
<div class="b" style="left:971px;top:330px;width:465px;height:5px;background:linear-gradient(to right,#000,#0808e8);box-shadow:0 1px 0 rgba(255,255,255,0.08)"></div>
<svg class="b" style="left:1428px;top:333px" width="10" height="8" viewBox="0 0 10 8"><path d="M1 7 L5 1.5 L9 7 Z" fill="#fff" stroke="#000" stroke-width="1"/></svg>
<div class="rad" style="left:769px;top:350px"></div>
<div class="t" style="left:781px;top:348px;color:#d0d0d0;">Brightness</div>
<div class="b" style="left:845px;top:357px;width:6px;height:1px;background:repeating-linear-gradient(to right,#a0a0a0 0 2px,transparent 2px 6px)"></div>
<div class="fld" style="left:855px;top:345px;width:74px;height:17px"></div>
<div class="up" style="left:921px;top:348px;border-bottom-color:#a0a0a0"></div>
<div class="dn" style="left:921px;top:354px;border-top-color:#a0a0a0"></div>
<div class="t" style="left:861px;top:348px;color:#d0d0d0;">80 %</div>
<div class="b" style="left:930px;top:346px;width:507px;height:15px;background:#333;border-radius:0 2px 2px 0;box-shadow:0 1px 0 #5a5a5a"></div>
<div class="b" style="left:930px;top:346px;width:406px;height:15px;background:#808080"></div>
<div class="b" style="left:1184px;top:357px;width:1px;height:3px;background:#a88a40"></div>
<div class="b" style="left:1335px;top:346px;width:2px;height:15px;background:#f0a818"></div>
<div class="b" style="left:772px;top:377px;width:0;height:0;border-style:solid;border-width:4px 0 4px 5px;border-color:transparent transparent transparent #1a1a1a"></div>
<div class="t" style="left:781px;top:375px;color:#d0d0d0;">Texture Map</div>
<div class="rb" style="left:855px;top:373px;width:20px;height:17px"></div>
<div class="b" style="left:864px;top:378px;width:0;height:0;border-style:solid;border-width:3.5px 0 3.5px 4px;border-color:transparent transparent transparent #e6e6e6"></div>
<div class="b" style="left:878px;top:373px;width:523px;height:17px;border-radius:8px;background:linear-gradient(#777,#5f5f5f);box-shadow:0 0 0 1px #353535"></div>
<div class="t" style="left:878px;top:375px;color:#d0d0d0;width:523px;text-align:center">TexXSIBitmap</div>
<div class="rb" style="left:1405px;top:373px;width:32px;height:17px"></div>
<div class="t" style="left:1405px;top:376px;color:#d0d0d0;width:32px;text-align:center">...</div>
<svg class="b" style="left:854px;top:396px" width="50" height="50" viewBox="0 0 50 50"><defs><filter id="txn" x="0" y="0" width="100%" height="100%"><feTurbulence type="fractalNoise" baseFrequency="0.35 0.03" numOctaves="3" seed="7"/><feColorMatrix type="matrix" values="0 0 0 0 0.62  0 0 0 0 0.48  0 0 0 0 0.33  3.2 0 0 0 -1.55"/></filter></defs><rect width="50" height="50" fill="#f0e1ca"/><rect width="50" height="50" filter="url(#txn)" opacity="0.55"/></svg>
<div class="t" style="left:908px;top:394px;color:#d0d0d0;">Campionamento</div>
<div class="dd dis" style="left:1002px;top:392px;width:81px;height:16px"></div>
<div class="dn" style="left:1069px;top:399px;border-width:4px 5px 0 5px;border-top-color:#8a8a8a"></div>
<div class="t" style="left:1009px;top:393px;color:#8a8a8a;">Nessuno</div>
<div class="t" style="left:908px;top:414px;color:#d0d0d0;">Offset Blur</div>
<div class="fld" style="left:1002px;top:411px;width:81px;height:17px"></div>
<div class="up" style="left:1075px;top:414px;border-bottom-color:#a0a0a0"></div>
<div class="dn" style="left:1075px;top:420px;border-top-color:#a0a0a0"></div>
<div class="t" style="left:1008px;top:414px;color:#d0d0d0;">0 %</div>
<div class="t" style="left:908px;top:435px;color:#d0d0d0;">Scala Blur</div>
<div class="fld" style="left:1002px;top:432px;width:81px;height:17px"></div>
<div class="up" style="left:1075px;top:436px;border-bottom-color:#a0a0a0"></div>
<div class="dn" style="left:1075px;top:442px;border-top-color:#a0a0a0"></div>
<div class="t" style="left:1008px;top:435px;color:#d0d0d0;">0 %</div>
<div class="rad" style="left:769px;top:459px"></div>
<div class="t" style="left:781px;top:457px;color:#d0d0d0;">Mix Mode</div>
<div class="b" style="left:839px;top:466px;width:12px;height:1px;background:repeating-linear-gradient(to right,#a0a0a0 0 2px,transparent 2px 6px)"></div>
<div class="dd" style="left:855px;top:455px;width:582px;height:16px"></div>
<div class="dn" style="left:1423px;top:462px;border-width:4px 5px 0 5px;border-top-color:#e8e8e8"></div>
<div class="t" style="left:862px;top:456px;color:#d0d0d0;">None</div>
<div class="rad" style="left:769px;top:479px"></div>
<div class="t" style="left:781px;top:477px;color:#d0d0d0;">Mix Strength</div>
<div class="fld" style="left:855px;top:474px;width:74px;height:17px"></div>
<div class="up" style="left:921px;top:478px;border-bottom-color:#a0a0a0"></div>
<div class="dn" style="left:921px;top:484px;border-top-color:#a0a0a0"></div>
<div class="t" style="left:861px;top:477px;color:#d0d0d0;">1</div>
<div class="b" style="left:930px;top:475px;width:507px;height:15px;background:#333;border-radius:0 2px 2px 0;box-shadow:0 1px 0 #5a5a5a"></div>
<div class="b" style="left:930px;top:475px;width:507px;height:15px;background:#808080"></div>
<div class="b" style="left:1184px;top:486px;width:1px;height:3px;background:#a88a40"></div>
<div class="b" style="left:1434px;top:475px;width:2px;height:15px;background:#f0a818"></div>
<div class="b" style="left:759px;top:500px;width:688px;height:1px;background:#353535"></div>
<div class="b" style="left:759px;top:501px;width:688px;height:1px;background:#5c5c5c"></div>
<div class="b" style="left:759px;top:507px;width:688px;height:16px;background:#6a6a6a"></div>
<div class="dn" style="left:770px;top:514px;border-width:4px 4px 0 4px;border-top-color:#e0e0e0"></div>
<div class="t" style="left:779px;top:509px;color:#dadada;">Diffuse Layer Transparency</div>
<div class="rad" style="left:769px;top:531px"></div>
<div class="t" style="left:781px;top:529px;color:#d0d0d0;">Color</div>
<div class="b" style="left:815px;top:538px;width:24px;height:1px;background:repeating-linear-gradient(to right,#a0a0a0 0 2px,transparent 2px 6px)"></div>
<div class="dn" style="left:844px;top:531px;border-width:5px 4px 0 4px;border-top-color:#1a1a1a"></div>
<div class="b" style="left:855px;top:527px;width:26px;height:41px;background:#fff;box-shadow:0 0 0 1px #2a2a2a"></div>
<div class="rb" style="left:855px;top:571px;width:26px;height:16px"></div>
<div class="b" style="left:867px;top:576px;width:0;height:0;border-style:solid;border-width:3.5px 0 3.5px 4px;border-color:transparent transparent transparent #e6e6e6"></div>
<div class="t" style="left:886px;top:530px;color:#d0d0d0;">R</div>
<div class="fld" style="left:900px;top:527px;width:67px;height:17px"></div>
<div class="up" style="left:959px;top:530px;border-bottom-color:#a0a0a0"></div>
<div class="dn" style="left:959px;top:536px;border-top-color:#a0a0a0"></div>
<div class="t" style="left:906px;top:530px;color:#d0d0d0;">255</div>
<div class="b" style="left:971px;top:533px;width:465px;height:5px;background:linear-gradient(to right,#000,#f00808);box-shadow:0 1px 0 rgba(255,255,255,0.08)"></div>
<svg class="b" style="left:1428px;top:536px" width="10" height="8" viewBox="0 0 10 8"><path d="M1 7 L5 1.5 L9 7 Z" fill="#fff" stroke="#000" stroke-width="1"/></svg>
<div class="t" style="left:886px;top:551px;color:#d0d0d0;">G</div>
<div class="fld" style="left:900px;top:548px;width:67px;height:17px"></div>
<div class="up" style="left:959px;top:552px;border-bottom-color:#a0a0a0"></div>
<div class="dn" style="left:959px;top:558px;border-top-color:#a0a0a0"></div>
<div class="t" style="left:906px;top:551px;color:#d0d0d0;">255</div>
<div class="b" style="left:971px;top:554px;width:465px;height:5px;background:linear-gradient(to right,#000,#08f008);box-shadow:0 1px 0 rgba(255,255,255,0.08)"></div>
<svg class="b" style="left:1428px;top:557px" width="10" height="8" viewBox="0 0 10 8"><path d="M1 7 L5 1.5 L9 7 Z" fill="#fff" stroke="#000" stroke-width="1"/></svg>
<div class="t" style="left:886px;top:572px;color:#d0d0d0;">B</div>
<div class="fld" style="left:900px;top:569px;width:67px;height:17px"></div>
<div class="up" style="left:959px;top:572px;border-bottom-color:#a0a0a0"></div>
<div class="dn" style="left:959px;top:578px;border-top-color:#a0a0a0"></div>
<div class="t" style="left:906px;top:572px;color:#d0d0d0;">255</div>
<div class="b" style="left:971px;top:575px;width:465px;height:5px;background:linear-gradient(to right,#000,#0808e8);box-shadow:0 1px 0 rgba(255,255,255,0.08)"></div>
<svg class="b" style="left:1428px;top:578px" width="10" height="8" viewBox="0 0 10 8"><path d="M1 7 L5 1.5 L9 7 Z" fill="#fff" stroke="#000" stroke-width="1"/></svg>
<div class="rad" style="left:769px;top:595px"></div>
<div class="t" style="left:781px;top:593px;color:#d0d0d0;">Amount</div>
<div class="b" style="left:827px;top:602px;width:24px;height:1px;background:repeating-linear-gradient(to right,#a0a0a0 0 2px,transparent 2px 6px)"></div>
<div class="fld" style="left:855px;top:590px;width:74px;height:17px"></div>
<div class="up" style="left:921px;top:594px;border-bottom-color:#a0a0a0"></div>
<div class="dn" style="left:921px;top:600px;border-top-color:#a0a0a0"></div>
<div class="t" style="left:861px;top:593px;color:#d0d0d0;">0 %</div>
<div class="b" style="left:930px;top:591px;width:507px;height:15px;background:#333;border-radius:0 2px 2px 0;box-shadow:0 1px 0 #5a5a5a"></div>
<div class="b" style="left:1184px;top:602px;width:1px;height:3px;background:#a88a40"></div>
<div class="b" style="left:930px;top:591px;width:2px;height:15px;background:#f0a818"></div>
<div class="t" style="left:781px;top:621px;color:#d0d0d0;">Texture Map</div>
<div class="rb" style="left:855px;top:618px;width:20px;height:17px"></div>
<div class="b" style="left:864px;top:624px;width:0;height:0;border-style:solid;border-width:3.5px 0 3.5px 4px;border-color:transparent transparent transparent #e6e6e6"></div>
<div class="b" style="left:878px;top:618px;width:523px;height:17px;border-radius:8px;background:linear-gradient(#777,#5f5f5f);box-shadow:0 0 0 1px #353535"></div>
<div class="rb" style="left:1405px;top:618px;width:32px;height:17px"></div>
<div class="t" style="left:1405px;top:621px;color:#d0d0d0;width:32px;text-align:center">...</div>
<svg class="b" style="left:768px;top:642px" width="10" height="10" viewBox="0 0 10 10"><path d="M8.3 3 A4 4 0 1 0 3 8.6" fill="none" stroke="#303030" stroke-width="1.1"/><path d="M3 8.6 A4 4 0 0 0 8.3 3" fill="none" stroke="#7a7a7a" stroke-width="1.1"/></svg>
<div class="t" style="left:781px;top:641px;color:#8a8a8a;">Mix Mode</div>
<div class="b" style="left:839px;top:650px;width:12px;height:1px;background:repeating-linear-gradient(to right,#7a7a7a 0 2px,transparent 2px 6px)"></div>
<div class="dd dis" style="left:855px;top:639px;width:582px;height:16px"></div>
<div class="dn" style="left:1423px;top:646px;border-width:4px 5px 0 5px;border-top-color:#8a8a8a"></div>
<div class="t" style="left:862px;top:640px;color:#8a8a8a;">None</div>
<svg class="b" style="left:768px;top:662px" width="10" height="10" viewBox="0 0 10 10"><path d="M8.3 3 A4 4 0 1 0 3 8.6" fill="none" stroke="#303030" stroke-width="1.1"/><path d="M3 8.6 A4 4 0 0 0 8.3 3" fill="none" stroke="#7a7a7a" stroke-width="1.1"/></svg>
<div class="t" style="left:781px;top:661px;color:#8a8a8a;">Mix Strength</div>
<div class="fld" style="left:855px;top:659px;width:74px;height:16px;background:#3c3c3c"></div>
<div class="up" style="left:921px;top:662px;border-bottom-color:#7a7a7a"></div>
<div class="dn" style="left:921px;top:668px;border-top-color:#7a7a7a"></div>
<div class="t" style="left:861px;top:662px;color:#8a8a8a;">1</div>
<div class="b" style="left:930px;top:660px;width:507px;height:15px;background:#333;border-radius:0 2px 2px 0;box-shadow:0 1px 0 #5a5a5a"></div>
<div class="b" style="left:930px;top:660px;width:507px;height:15px;background:#7c7c7c"></div>
<div class="b" style="left:1184px;top:671px;width:1px;height:3px;background:#5a5a5a"></div>
<div class="rad" style="left:769px;top:683px"></div>
<div class="t" style="left:781px;top:681px;color:#d0d0d0;">Invert</div>
<div class="b" style="left:815px;top:690px;width:36px;height:1px;background:repeating-linear-gradient(to right,#a0a0a0 0 2px,transparent 2px 6px)"></div>
<div class="chk" style="left:855px;top:681px"></div>
<div class="b" style="left:759px;top:700px;width:688px;height:1px;background:#353535"></div>
<div class="b" style="left:759px;top:701px;width:688px;height:1px;background:#5c5c5c"></div>
<div class="b" style="left:759px;top:703px;width:688px;height:16px;background:#6a6a6a"></div>
<div class="dn" style="left:770px;top:710px;border-width:4px 4px 0 4px;border-top-color:#e0e0e0"></div>
<div class="t" style="left:779px;top:705px;color:#dadada;">Diffuse Options</div>
<div class="rad" style="left:769px;top:728px"></div>
<div class="t" style="left:781px;top:726px;color:#d0d0d0;">Roughness</div>
<div class="b" style="left:845px;top:735px;width:78px;height:1px;background:repeating-linear-gradient(to right,#a0a0a0 0 2px,transparent 2px 6px)"></div>
<div class="fld" style="left:928px;top:723px;width:74px;height:17px"></div>
<div class="up" style="left:994px;top:726px;border-bottom-color:#a0a0a0"></div>
<div class="dn" style="left:994px;top:732px;border-top-color:#a0a0a0"></div>
<div class="t" style="left:934px;top:726px;color:#d0d0d0;">0</div>
<div class="b" style="left:1003px;top:724px;width:434px;height:15px;background:#333;border-radius:0 2px 2px 0;box-shadow:0 1px 0 #5a5a5a"></div>
<div class="b" style="left:1221px;top:735px;width:1px;height:3px;background:#a88a40"></div>
<div class="b" style="left:1003px;top:724px;width:2px;height:15px;background:#f0a818"></div>
<div class="t" style="left:781px;top:747px;color:#d0d0d0;">Texture Map</div>
<div class="b" style="left:851px;top:756px;width:72px;height:1px;background:repeating-linear-gradient(to right,#a0a0a0 0 2px,transparent 2px 6px)"></div>
<div class="rb" style="left:928px;top:744px;width:20px;height:17px"></div>
<div class="b" style="left:937px;top:750px;width:0;height:0;border-style:solid;border-width:3.5px 0 3.5px 4px;border-color:transparent transparent transparent #e6e6e6"></div>
<div class="b" style="left:951px;top:744px;width:450px;height:17px;border-radius:8px;background:linear-gradient(#777,#5f5f5f);box-shadow:0 0 0 1px #353535"></div>
<div class="rb" style="left:1405px;top:744px;width:32px;height:17px"></div>
<div class="t" style="left:1405px;top:747px;color:#d0d0d0;width:32px;text-align:center">...</div>
<div class="rad" style="left:769px;top:776px"></div>
<div class="t" style="left:781px;top:774px;color:#d0d0d0;">Use Irradiance Map</div>
<div class="b" style="left:893px;top:783px;width:30px;height:1px;background:repeating-linear-gradient(to right,#a0a0a0 0 2px,transparent 2px 6px)"></div>
<div class="chk on" style="left:928px;top:773px"></div>
<svg class="b" style="left:928px;top:773px" width="13" height="13" viewBox="0 0 13 13"><path d="M2.1 5.9 L3.7 4.6 L4.3 8.4 L10.9 0.9 L11.7 1.9 L4.4 10.9 L3.1 11.0 Z" fill="#c4c4c4"/></svg>
<div class="rad" style="left:769px;top:802px"></div>
<div class="t" style="left:781px;top:800px;color:#d0d0d0;">Use VRayDirt</div>
<div class="b" style="left:857px;top:809px;width:66px;height:1px;background:repeating-linear-gradient(to right,#a0a0a0 0 2px,transparent 2px 6px)"></div>
<div class="chk" style="left:928px;top:799px"></div>
<svg class="b" style="left:768px;top:820px" width="10" height="10" viewBox="0 0 10 10"><path d="M8.3 3 A4 4 0 1 0 3 8.6" fill="none" stroke="#303030" stroke-width="1.1"/><path d="M3 8.6 A4 4 0 0 0 8.3 3" fill="none" stroke="#7a7a7a" stroke-width="1.1"/></svg>
<div class="t" style="left:781px;top:819px;color:#8a8a8a;">2nd with Inverted Normals</div>
<div class="chk dis" style="left:928px;top:819px"></div>
<svg class="b" style="left:768px;top:839px" width="10" height="10" viewBox="0 0 10 10"><path d="M8.3 3 A4 4 0 1 0 3 8.6" fill="none" stroke="#303030" stroke-width="1.1"/><path d="M3 8.6 A4 4 0 0 0 8.3 3" fill="none" stroke="#7a7a7a" stroke-width="1.1"/></svg>
<div class="t" style="left:781px;top:838px;color:#8a8a8a;">VrayDirt mixing</div>
<div class="b" style="left:869px;top:847px;width:54px;height:1px;background:repeating-linear-gradient(to right,#7a7a7a 0 2px,transparent 2px 6px)"></div>
<div class="dd dis" style="left:928px;top:836px;width:509px;height:16px"></div>
<div class="dn" style="left:1423px;top:843px;border-width:4px 5px 0 5px;border-top-color:#8a8a8a"></div>
<div class="t" style="left:935px;top:837px;color:#8a8a8a;">Minimum</div>
<div class="b" style="left:1447px;top:259px;width:4px;height:661px;background:#484848"></div>
<div class="b" style="left:1451px;top:56px;width:4px;height:864px;background:#484848"></div>
<div class="b" style="left:1451px;top:56px;width:1px;height:862px;background:#353535"></div>
<div class="b" style="left:1455px;top:56px;width:1px;height:862px;background:#6a6a6a"></div>
<div class="b" style="left:1456px;top:56px;width:695px;height:864px;background:#484848;border-bottom-right-radius:4px"></div>
<div class="b" style="left:1456px;top:57px;width:695px;height:18px;background:#6a6a6a"></div>
<div class="b" style="left:1456px;top:75px;width:695px;height:1px;background:#3a3a3a"></div>
<div class="b" style="left:1459px;top:62px;width:10px;height:11px;background:linear-gradient(135deg,#a8a8a8,#666);box-shadow:0 0 0 1px #3a3a3a"></div>
<div class="t" style="left:1480px;top:60px;color:#f5a623;">Attributi</div>
<div class="b" style="left:1456px;top:76px;width:695px;height:21px;background:#6a6a6a"></div>
<div class="b" style="left:1456px;top:97px;width:695px;height:1px;background:#383838"></div>
<div class="b" style="left:1456px;top:98px;width:695px;height:1px;background:#5a5a5a"></div>
<svg class="b" style="left:1462px;top:81px" width="12" height="12" shape-rendering="crispEdges"><rect x="0" y="0" width="1" height="1" fill="#3c3c3c"/><rect x="1" y="1" width="1" height="1" fill="#3c3c3c"/><rect x="1" y="0" width="1" height="1" fill="#8c8c8c"/><rect x="0" y="1" width="1" height="1" fill="#8c8c8c"/><rect x="0" y="3" width="1" height="1" fill="#3c3c3c"/><rect x="1" y="4" width="1" height="1" fill="#3c3c3c"/><rect x="1" y="3" width="1" height="1" fill="#8c8c8c"/><rect x="0" y="4" width="1" height="1" fill="#8c8c8c"/><rect x="0" y="6" width="1" height="1" fill="#3c3c3c"/><rect x="1" y="7" width="1" height="1" fill="#3c3c3c"/><rect x="1" y="6" width="1" height="1" fill="#8c8c8c"/><rect x="0" y="7" width="1" height="1" fill="#8c8c8c"/><rect x="0" y="9" width="1" height="1" fill="#3c3c3c"/><rect x="1" y="10" width="1" height="1" fill="#3c3c3c"/><rect x="1" y="9" width="1" height="1" fill="#8c8c8c"/><rect x="0" y="10" width="1" height="1" fill="#8c8c8c"/><rect x="3" y="0" width="1" height="1" fill="#3c3c3c"/><rect x="4" y="1" width="1" height="1" fill="#3c3c3c"/><rect x="4" y="0" width="1" height="1" fill="#8c8c8c"/><rect x="3" y="1" width="1" height="1" fill="#8c8c8c"/><rect x="3" y="3" width="1" height="1" fill="#3c3c3c"/><rect x="4" y="4" width="1" height="1" fill="#3c3c3c"/><rect x="4" y="3" width="1" height="1" fill="#8c8c8c"/><rect x="3" y="4" width="1" height="1" fill="#8c8c8c"/><rect x="3" y="6" width="1" height="1" fill="#3c3c3c"/><rect x="4" y="7" width="1" height="1" fill="#3c3c3c"/><rect x="4" y="6" width="1" height="1" fill="#8c8c8c"/><rect x="3" y="7" width="1" height="1" fill="#8c8c8c"/><rect x="3" y="9" width="1" height="1" fill="#3c3c3c"/><rect x="4" y="10" width="1" height="1" fill="#3c3c3c"/><rect x="4" y="9" width="1" height="1" fill="#8c8c8c"/><rect x="3" y="10" width="1" height="1" fill="#8c8c8c"/><rect x="6" y="0" width="1" height="1" fill="#3c3c3c"/><rect x="7" y="1" width="1" height="1" fill="#3c3c3c"/><rect x="7" y="0" width="1" height="1" fill="#8c8c8c"/><rect x="6" y="1" width="1" height="1" fill="#8c8c8c"/><rect x="6" y="3" width="1" height="1" fill="#3c3c3c"/><rect x="7" y="4" width="1" height="1" fill="#3c3c3c"/><rect x="7" y="3" width="1" height="1" fill="#8c8c8c"/><rect x="6" y="4" width="1" height="1" fill="#8c8c8c"/><rect x="6" y="6" width="1" height="1" fill="#3c3c3c"/><rect x="7" y="7" width="1" height="1" fill="#3c3c3c"/><rect x="7" y="6" width="1" height="1" fill="#8c8c8c"/><rect x="6" y="7" width="1" height="1" fill="#8c8c8c"/><rect x="6" y="9" width="1" height="1" fill="#3c3c3c"/><rect x="7" y="10" width="1" height="1" fill="#3c3c3c"/><rect x="7" y="9" width="1" height="1" fill="#8c8c8c"/><rect x="6" y="10" width="1" height="1" fill="#8c8c8c"/><rect x="9" y="0" width="1" height="1" fill="#3c3c3c"/><rect x="10" y="1" width="1" height="1" fill="#3c3c3c"/><rect x="10" y="0" width="1" height="1" fill="#8c8c8c"/><rect x="9" y="1" width="1" height="1" fill="#8c8c8c"/><rect x="9" y="3" width="1" height="1" fill="#3c3c3c"/><rect x="10" y="4" width="1" height="1" fill="#3c3c3c"/><rect x="10" y="3" width="1" height="1" fill="#8c8c8c"/><rect x="9" y="4" width="1" height="1" fill="#8c8c8c"/><rect x="9" y="6" width="1" height="1" fill="#3c3c3c"/><rect x="10" y="7" width="1" height="1" fill="#3c3c3c"/><rect x="10" y="6" width="1" height="1" fill="#8c8c8c"/><rect x="9" y="7" width="1" height="1" fill="#8c8c8c"/><rect x="9" y="9" width="1" height="1" fill="#3c3c3c"/><rect x="10" y="10" width="1" height="1" fill="#3c3c3c"/><rect x="10" y="9" width="1" height="1" fill="#8c8c8c"/><rect x="9" y="10" width="1" height="1" fill="#8c8c8c"/></svg>
<div class="t" style="left:1483px;top:80px;color:#d0d0d0;">Modo</div>
<div class="t" style="left:1526px;top:80px;color:#d0d0d0;">Modifica</div>
<div class="t" style="left:1586px;top:80px;color:#d0d0d0;">Dati Utente</div>
<svg class="b" style="left:2002px;top:78px" width="150" height="18" viewBox="0 -2 150 18">
<path d="M0 6.3 L14 -0.6 L10.5 6.3 L14 13 Z" fill="#1c1c1c"/>
<path d="M19 13 L33 6" stroke="#7f7f7f" stroke-width="1.2" opacity="0.6"/>
<path d="M51.7 -0.4 L58 13.8 L51.7 10.8 L45.6 13.8 Z" fill="#1c1c1c"/>
<circle cx="76.2" cy="4.2" r="4.2" fill="none" stroke="#1c1c1c" stroke-width="1.5"/>
<path d="M79.3 7.4 L84.5 12.7" stroke="#1c1c1c" stroke-width="2" stroke-linecap="round"/>
<path d="M98.4 6.5 V3 A3.2 3.2 0 0 1 104.8 3 V6.5" fill="none" stroke="#1c1c1c" stroke-width="1.6"/>
<rect x="96.4" y="5.8" width="10.4" height="7.8" rx="1.6" fill="#1c1c1c"/>
<rect x="101.1" y="8.6" width="1.1" height="2.2" fill="#6a6a6a" opacity="0.7"/>
<circle cx="119.5" cy="4.3" r="2.6" fill="none" stroke="#1c1c1c" stroke-width="1"/>
<circle cx="119.5" cy="11.4" r="2.6" fill="none" stroke="#1c1c1c" stroke-width="1"/>
<rect x="132.6" y="-0.4" width="10.8" height="13.6" rx="1" fill="none" stroke="#1c1c1c" stroke-width="1.2"/>
<rect x="132.3" y="-0.7" width="11.4" height="2.2" rx="0.8" fill="#1c1c1c"/>
<path d="M138 3.8 V9.8 M135 6.8 H141" stroke="#1c1c1c" stroke-width="1.8"/>
</svg>
<svg class="b" style="left:1461px;top:104px" width="17" height="17" viewBox="0 0 17 17"><rect x="0" y="0" width="17" height="17" fill="#222" rx="1.5"/><g fill="#f4f4f4"><rect x="1.5" y="1.5" width="4.5" height="4.5"/><rect x="11" y="1.5" width="4.5" height="4.5"/><rect x="6.2" y="6.2" width="4.6" height="4.6"/><rect x="1.5" y="11" width="4.5" height="4.5"/><rect x="11" y="11" width="4.5" height="4.5"/></g></svg>
<div class="t" style="left:1484px;top:106px;color:#d0d0d0;">Vray Shader [TexXSIBitmap]</div>
<div class="tab" style="left:1459px;top:125px;width:104px;height:19px;background:#6d6d6d;border-radius:4px 0 0 4px;"></div>
<div class="t" style="left:1459px;top:128px;width:104px;text-align:center;color:#d8d8d8">Base</div>
<div class="tab" style="left:1562px;top:125px;width:104px;height:19px;background:#8ba7d2;"></div>
<div class="t" style="left:1562px;top:128px;width:104px;text-align:center;color:#0e1830">Shader</div>
<div class="tab" style="left:1665px;top:125px;width:103px;height:19px;background:#6d6d6d;"></div>
<div class="t" style="left:1665px;top:128px;width:103px;text-align:center;color:#d8d8d8">Uvw parameters</div>
<div class="tab" style="left:1767px;top:125px;width:104px;height:19px;background:#6d6d6d;border-radius:0 4px 4px 0;"></div>
<div class="t" style="left:1767px;top:128px;width:104px;text-align:center;color:#d8d8d8">Alpha parameters</div>
<div class="dn" style="left:1462px;top:150px;border-width:4px 4px 0 4px;border-top-color:#1e1e1e"></div>
<svg class="b" style="left:1472px;top:146px" width="91" height="91" viewBox="0 0 91 91"><defs><pattern id="st3" patternUnits="userSpaceOnUse" width="25.9" height="25.9" patternTransform="rotate(45) translate(12.7 0)"><rect width="25.9" height="25.9" fill="#bdbdbd"/><rect x="0" y="0" width="13.2" height="25.9" fill="#7c7c7c"/></pattern><filter id="tc3" x="0" y="0" width="100%" height="100%"><feTurbulence type="fractalNoise" baseFrequency="0.25 0.06" numOctaves="3" seed="11"/><feColorMatrix type="matrix" values="0 0 0 0 0.5  0 0 0 0 0.44  0 0 0 0 0.36  3.0 0 0 0 -1.5"/></filter></defs>
<rect width="91" height="91" fill="url(#st3)"/>
<path d="M8.5 25.5 L37.5 7.4 L83.2 18.7 L56.7 38.3 L55.2 87.4 L10 71.7 Z" fill="#b4aa9b"/>
<clipPath id="cc3"><path d="M8.5 25.5 L37.5 7.4 L83.2 18.7 L56.7 38.3 L55.2 87.4 L10 71.7 Z"/></clipPath><rect x="5" y="5" width="80" height="85" filter="url(#tc3)" clip-path="url(#cc3)" opacity="0.45"/>
<path d="M56.7 38.3 L83.2 18.7 L81.2 63.9 L55.2 87.4 Z" fill="#221d19"/>
</svg>
<div class="b" style="left:1458px;top:242px;width:688px;height:16px;background:#333333"></div>
<div class="t" style="left:1460px;top:245px;color:#d0d0d0;font-weight:bold;">Proprietà Shader</div>
<div class="rad" style="left:1460px;top:268px"></div>
<div class="t" style="left:1472px;top:266px;color:#d0d0d0;">Filter</div>
<div class="b" style="left:1506px;top:275px;width:84px;height:1px;background:repeating-linear-gradient(to right,#a0a0a0 0 2px,transparent 2px 6px)"></div>
<div class="fld" style="left:1591px;top:263px;width:552px;height:17px"></div>
<div class="rad" style="left:1460px;top:288px"></div>
<div class="t" style="left:1472px;top:286px;color:#d0d0d0;">Vray Shaders</div>
<div class="b" style="left:1548px;top:295px;width:42px;height:1px;background:repeating-linear-gradient(to right,#a0a0a0 0 2px,transparent 2px 6px)"></div>
<div class="dd" style="left:1591px;top:284px;width:552px;height:16px"></div>
<div class="dn" style="left:2129px;top:291px;border-width:4px 5px 0 5px;border-top-color:#e8e8e8"></div>
<div class="t" style="left:1598px;top:285px;color:#d0d0d0;">VRayAdvBitmap</div>
<div class="b" style="left:1458px;top:305px;width:688px;height:1px;background:#353535"></div>
<div class="b" style="left:1458px;top:306px;width:688px;height:1px;background:#5c5c5c"></div>
<div class="rad" style="left:1460px;top:315px"></div>
<div class="t" style="left:1472px;top:313px;color:#d0d0d0;">Exposure</div>
<div class="b" style="left:1530px;top:322px;width:60px;height:1px;background:repeating-linear-gradient(to right,#a0a0a0 0 2px,transparent 2px 6px)"></div>
<div class="fld" style="left:1591px;top:310px;width:74px;height:17px"></div>
<div class="up" style="left:1657px;top:314px;border-bottom-color:#a0a0a0"></div>
<div class="dn" style="left:1657px;top:320px;border-top-color:#a0a0a0"></div>
<div class="t" style="left:1597px;top:313px;color:#d0d0d0;">0</div>
<div class="b" style="left:1666px;top:311px;width:477px;height:15px;background:#333;border-radius:0 2px 2px 0;box-shadow:0 1px 0 #5a5a5a"></div>
<div class="b" style="left:1666px;top:311px;width:240px;height:15px;background:#808080"></div>
<div class="b" style="left:1905px;top:311px;width:2px;height:15px;background:#f0a818"></div>
<div class="rad" style="left:1460px;top:335px"></div>
<div class="t" style="left:1472px;top:333px;color:#d0d0d0;">Enable effects</div>
<div class="b" style="left:1554px;top:342px;width:36px;height:1px;background:repeating-linear-gradient(to right,#a0a0a0 0 2px,transparent 2px 6px)"></div>
<div class="chk" style="left:1591px;top:333px"></div>
<div class="rad" style="left:1460px;top:354px"></div>
<div class="t" style="left:1472px;top:352px;color:#d0d0d0;">Flip v</div>
<div class="b" style="left:1506px;top:361px;width:84px;height:1px;background:repeating-linear-gradient(to right,#a0a0a0 0 2px,transparent 2px 6px)"></div>
<div class="chk" style="left:1591px;top:352px"></div>
<div class="rad" style="left:1460px;top:373px"></div>
<div class="t" style="left:1472px;top:371px;color:#d0d0d0;">Flip u</div>
<div class="b" style="left:1506px;top:380px;width:84px;height:1px;background:repeating-linear-gradient(to right,#a0a0a0 0 2px,transparent 2px 6px)"></div>
<div class="chk" style="left:1591px;top:371px"></div>
<div class="rad" style="left:1460px;top:392px"></div>
<div class="t" style="left:1472px;top:390px;color:#d0d0d0;">Rgba to grayscl</div>
<div class="b" style="left:1560px;top:399px;width:30px;height:1px;background:repeating-linear-gradient(to right,#a0a0a0 0 2px,transparent 2px 6px)"></div>
<div class="chk" style="left:1591px;top:390px"></div>
<div class="rad" style="left:1460px;top:412px"></div>
<div class="t" style="left:1472px;top:410px;color:#d0d0d0;">Brightness</div>
<div class="b" style="left:1536px;top:419px;width:54px;height:1px;background:repeating-linear-gradient(to right,#a0a0a0 0 2px,transparent 2px 6px)"></div>
<div class="fld" style="left:1591px;top:407px;width:74px;height:17px"></div>
<div class="up" style="left:1657px;top:410px;border-bottom-color:#a0a0a0"></div>
<div class="dn" style="left:1657px;top:416px;border-top-color:#a0a0a0"></div>
<div class="t" style="left:1597px;top:410px;color:#d0d0d0;">0</div>
<div class="b" style="left:1666px;top:408px;width:477px;height:15px;background:#333;border-radius:0 2px 2px 0;box-shadow:0 1px 0 #5a5a5a"></div>
<div class="b" style="left:1906px;top:419px;width:1px;height:3px;background:#a88a40"></div>
<div class="b" style="left:1666px;top:408px;width:2px;height:15px;background:#f0a818"></div>
<div class="rad" style="left:1460px;top:433px"></div>
<div class="t" style="left:1472px;top:431px;color:#d0d0d0;">Gain</div>
<div class="b" style="left:1500px;top:440px;width:90px;height:1px;background:repeating-linear-gradient(to right,#a0a0a0 0 2px,transparent 2px 6px)"></div>
<div class="fld" style="left:1591px;top:428px;width:74px;height:17px"></div>
<div class="up" style="left:1657px;top:432px;border-bottom-color:#a0a0a0"></div>
<div class="dn" style="left:1657px;top:438px;border-top-color:#a0a0a0"></div>
<div class="t" style="left:1597px;top:431px;color:#d0d0d0;">100</div>
<div class="b" style="left:1666px;top:429px;width:477px;height:15px;background:#333;border-radius:0 2px 2px 0;box-shadow:0 1px 0 #5a5a5a"></div>
<div class="b" style="left:1666px;top:429px;width:477px;height:15px;background:#808080"></div>
<div class="b" style="left:1906px;top:440px;width:1px;height:3px;background:#a88a40"></div>
<div class="b" style="left:2141px;top:429px;width:2px;height:15px;background:#f0a818"></div>
<div class="rad" style="left:1460px;top:454px"></div>
<div class="t" style="left:1472px;top:452px;color:#d0d0d0;">Saturation</div>
<div class="b" style="left:1530px;top:461px;width:60px;height:1px;background:repeating-linear-gradient(to right,#a0a0a0 0 2px,transparent 2px 6px)"></div>
<div class="fld" style="left:1591px;top:449px;width:74px;height:17px"></div>
<div class="up" style="left:1657px;top:452px;border-bottom-color:#a0a0a0"></div>
<div class="dn" style="left:1657px;top:458px;border-top-color:#a0a0a0"></div>
<div class="t" style="left:1597px;top:452px;color:#d0d0d0;">100</div>
<div class="b" style="left:1666px;top:450px;width:477px;height:15px;background:#333;border-radius:0 2px 2px 0;box-shadow:0 1px 0 #5a5a5a"></div>
<div class="b" style="left:1666px;top:450px;width:477px;height:15px;background:#808080"></div>
<div class="b" style="left:1906px;top:461px;width:1px;height:3px;background:#a88a40"></div>
<div class="b" style="left:2141px;top:450px;width:2px;height:15px;background:#f0a818"></div>
<div class="rad" style="left:1460px;top:475px"></div>
<div class="t" style="left:1472px;top:473px;color:#d0d0d0;">Hue</div>
<div class="b" style="left:1500px;top:482px;width:90px;height:1px;background:repeating-linear-gradient(to right,#a0a0a0 0 2px,transparent 2px 6px)"></div>
<div class="fld" style="left:1591px;top:470px;width:74px;height:17px"></div>
<div class="up" style="left:1657px;top:474px;border-bottom-color:#a0a0a0"></div>
<div class="dn" style="left:1657px;top:480px;border-top-color:#a0a0a0"></div>
<div class="t" style="left:1597px;top:473px;color:#d0d0d0;">0</div>
<div class="b" style="left:1666px;top:471px;width:477px;height:15px;background:#333;border-radius:0 2px 2px 0;box-shadow:0 1px 0 #5a5a5a"></div>
<div class="b" style="left:1906px;top:482px;width:1px;height:3px;background:#a88a40"></div>
<div class="b" style="left:1666px;top:471px;width:2px;height:15px;background:#f0a818"></div>
<div class="b" style="left:1458px;top:492px;width:688px;height:1px;background:#353535"></div>
<div class="b" style="left:1458px;top:493px;width:688px;height:1px;background:#5c5c5c"></div>
<div class="t" style="left:1472px;top:499px;color:#d0d0d0;">Filter type</div>
<div class="b" style="left:1530px;top:508px;width:60px;height:1px;background:repeating-linear-gradient(to right,#a0a0a0 0 2px,transparent 2px 6px)"></div>
<div class="dd" style="left:1591px;top:498px;width:552px;height:16px"></div>
<div class="dn" style="left:2129px;top:505px;border-width:4px 5px 0 5px;border-top-color:#e8e8e8"></div>
<div class="t" style="left:1598px;top:499px;color:#d0d0d0;">Mip-map filtering</div>
<div class="rad" style="left:1460px;top:522px"></div>
<div class="t" style="left:1472px;top:520px;color:#d0d0d0;">Filter Blur</div>
<div class="b" style="left:1530px;top:529px;width:60px;height:1px;background:repeating-linear-gradient(to right,#a0a0a0 0 2px,transparent 2px 6px)"></div>
<div class="fld" style="left:1591px;top:517px;width:74px;height:17px"></div>
<div class="up" style="left:1657px;top:520px;border-bottom-color:#a0a0a0"></div>
<div class="dn" style="left:1657px;top:526px;border-top-color:#a0a0a0"></div>
<div class="t" style="left:1597px;top:520px;color:#d0d0d0;">1</div>
<div class="t" style="left:1472px;top:540px;color:#d0d0d0;">Color space</div>
<div class="b" style="left:1542px;top:549px;width:48px;height:1px;background:repeating-linear-gradient(to right,#a0a0a0 0 2px,transparent 2px 6px)"></div>
<div class="dd" style="left:1591px;top:538px;width:552px;height:16px"></div>
<div class="dn" style="left:2129px;top:545px;border-width:4px 5px 0 5px;border-top-color:#e8e8e8"></div>
<div class="t" style="left:1598px;top:539px;color:#d0d0d0;">Gamma corrected</div>
<div class="rad" style="left:1460px;top:562px"></div>
<div class="t" style="left:1472px;top:560px;color:#d0d0d0;">Gamma</div>
<div class="b" style="left:1518px;top:569px;width:72px;height:1px;background:repeating-linear-gradient(to right,#a0a0a0 0 2px,transparent 2px 6px)"></div>
<div class="fld" style="left:1591px;top:557px;width:74px;height:17px"></div>
<div class="up" style="left:1657px;top:560px;border-bottom-color:#a0a0a0"></div>
<div class="dn" style="left:1657px;top:566px;border-top-color:#a0a0a0"></div>
<div class="t" style="left:1597px;top:560px;color:#d0d0d0;">1</div>
<div class="b" style="left:1458px;top:579px;width:688px;height:1px;background:#353535"></div>
<div class="b" style="left:1458px;top:580px;width:688px;height:1px;background:#5c5c5c"></div>
<div class="rad" style="left:1460px;top:589px"></div>
<div class="t" style="left:1472px;top:587px;color:#d0d0d0;">Allow negative colors</div>
<div class="chk" style="left:1591px;top:587px"></div>
<div class="t" style="left:1472px;top:606px;color:#d0d0d0;">Interpolation</div>
<div class="b" style="left:1542px;top:615px;width:48px;height:1px;background:repeating-linear-gradient(to right,#a0a0a0 0 2px,transparent 2px 6px)"></div>
<div class="dd" style="left:1591px;top:604px;width:552px;height:16px"></div>
<div class="dn" style="left:2129px;top:611px;border-width:4px 5px 0 5px;border-top-color:#e8e8e8"></div>
<div class="t" style="left:1598px;top:605px;color:#d0d0d0;">Bilinear</div>
<div class="rad" style="left:1460px;top:628px"></div>
<div class="t" style="left:1472px;top:626px;color:#d0d0d0;">File</div>
<div class="b" style="left:1494px;top:635px;width:96px;height:1px;background:repeating-linear-gradient(to right,#a0a0a0 0 2px,transparent 2px 6px)"></div>
<div class="fld" style="left:1591px;top:623px;width:515px;height:17px"></div>
<div class="t" style="left:1597px;top:626px;color:#d0d0d0;">/Applications/Maxon/CINEMA 4D R13/tex/TEXTURE/LEGNI/Wood1.jpg</div>
<div class="rb" style="left:2111px;top:623px;width:33px;height:17px"></div>
<div class="t" style="left:2111px;top:626px;color:#d0d0d0;width:33px;text-align:center">...</div>
<div class="b" style="left:1458px;top:646px;width:688px;height:1px;background:#353535"></div>
<div class="b" style="left:1458px;top:647px;width:688px;height:1px;background:#5c5c5c"></div>
<div class="rad" style="left:1460px;top:654px"></div>
<div class="t" style="left:1472px;top:652px;color:#d0d0d0;">Frame sequence</div>
<div class="b" style="left:1566px;top:661px;width:24px;height:1px;background:repeating-linear-gradient(to right,#a0a0a0 0 2px,transparent 2px 6px)"></div>
<div class="chk" style="left:1591px;top:652px"></div>
<div class="rad" style="left:1460px;top:675px"></div>
<div class="t" style="left:1472px;top:673px;color:#d0d0d0;">Frame number</div>
<div class="b" style="left:1554px;top:682px;width:36px;height:1px;background:repeating-linear-gradient(to right,#a0a0a0 0 2px,transparent 2px 6px)"></div>
<div class="fld" style="left:1591px;top:670px;width:74px;height:17px"></div>
<div class="up" style="left:1657px;top:674px;border-bottom-color:#a0a0a0"></div>
<div class="dn" style="left:1657px;top:680px;border-top-color:#a0a0a0"></div>
<div class="t" style="left:1597px;top:673px;color:#d0d0d0;">0</div>
<div class="b" style="left:1458px;top:692px;width:688px;height:1px;background:#353535"></div>
<div class="b" style="left:1458px;top:693px;width:688px;height:1px;background:#5c5c5c"></div>
<div class="rad" style="left:1460px;top:703px"></div>
<div class="t" style="left:1472px;top:701px;color:#d0d0d0;">Frame offset</div>
<div class="b" style="left:1542px;top:710px;width:48px;height:1px;background:repeating-linear-gradient(to right,#a0a0a0 0 2px,transparent 2px 6px)"></div>
<div class="fld" style="left:1591px;top:698px;width:74px;height:18px"></div>
<div class="up" style="left:1657px;top:702px;border-bottom-color:#a0a0a0"></div>
<div class="dn" style="left:1657px;top:708px;border-top-color:#a0a0a0"></div>
<div class="t" style="left:1597px;top:702px;color:#d0d0d0;">0</div>
<div class="b" style="left:57px;top:56px;width:2094px;height:1px;background:#555555"></div>
<div class="b" style="left:2150px;top:56px;width:1px;height:864px;background:#2e2e2e"></div>
<div class="b" style="left:757px;top:918px;width:694px;height:1px;background:#333"></div>
<div class="b" style="left:1456px;top:918px;width:694px;height:1px;background:#333"></div>
<div class="b" style="left:57px;top:919px;width:2094px;height:1px;background:#363636"></div>
</div>
</body></html>
